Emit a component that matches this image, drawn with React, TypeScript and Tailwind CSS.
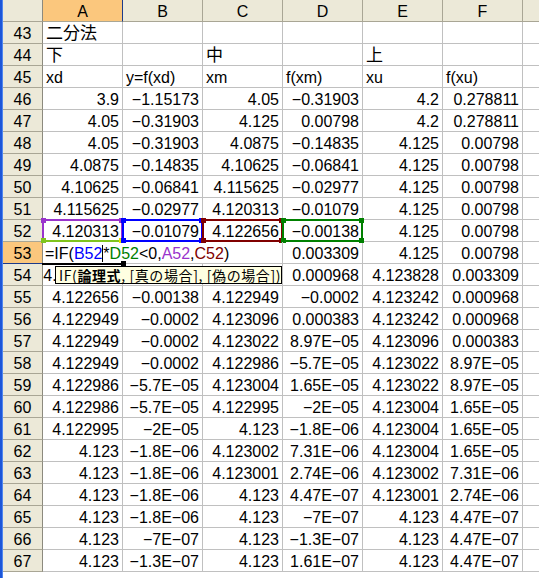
import React from "react";

// Excel 2003 style sheet: 二分法 (bisection) table
const COLS = ["A", "B", "C", "D", "E", "F"];

type Hl = { color: string; bottom?: string; corner?: string };

const HIGHLIGHT: Record<string, Hl> = {
  "52-0": { color: "#9933cc", bottom: "#7fc41c", corner: "#e6e600" },
  "52-1": { color: "#0000ff" },
  "52-2": { color: "#800000" },
  "52-3": { color: "#008000" },
};

const TEXT_ROWS: Record<number, string[]> = {
  43: ["二分法", "", "", "", "", ""],
  44: ["下", "", "中", "", "上", ""],
  45: ["xd", "y=f(xd)", "xm", "f(xm)", "xu", "f(xu)"],
};

// B54/C54 sit under the tooltip, so they are left blank
const NUM_ROWS: Record<number, string[]> = {
  46: ["3.9", "−1.15173", "4.05", "−0.31903", "4.2", "0.278811"],
  47: ["4.05", "−0.31903", "4.125", "0.00798", "4.2", "0.278811"],
  48: ["4.05", "−0.31903", "4.0875", "−0.14835", "4.125", "0.00798"],
  49: ["4.0875", "−0.14835", "4.10625", "−0.06841", "4.125", "0.00798"],
  50: ["4.10625", "−0.06841", "4.115625", "−0.02977", "4.125", "0.00798"],
  51: ["4.115625", "−0.02977", "4.120313", "−0.01079", "4.125", "0.00798"],
  52: ["4.120313", "−0.01079", "4.122656", "−0.00138", "4.125", "0.00798"],
  54: ["4.1234375", "", "", "0.000968", "4.123828", "0.003309"],
  55: ["4.122656", "−0.00138", "4.122949", "−0.0002", "4.123242", "0.000968"],
  56: ["4.122949", "−0.0002", "4.123096", "0.000383", "4.123242", "0.000968"],
  57: ["4.122949", "−0.0002", "4.123022", "8.97E−05", "4.123096", "0.000383"],
  58: ["4.122949", "−0.0002", "4.122986", "−5.7E−05", "4.123022", "8.97E−05"],
  59: ["4.122986", "−5.7E−05", "4.123004", "1.65E−05", "4.123022", "8.97E−05"],
  60: ["4.122986", "−5.7E−05", "4.122995", "−2E−05", "4.123004", "1.65E−05"],
  61: ["4.122995", "−2E−05", "4.123", "−1.8E−06", "4.123004", "1.65E−05"],
  62: ["4.123", "−1.8E−06", "4.123002", "7.31E−06", "4.123004", "1.65E−05"],
  63: ["4.123", "−1.8E−06", "4.123001", "2.74E−06", "4.123002", "7.31E−06"],
  64: ["4.123", "−1.8E−06", "4.123", "4.47E−07", "4.123001", "2.74E−06"],
  65: ["4.123", "−1.8E−06", "4.123", "−7E−07", "4.123", "4.47E−07"],
  66: ["4.123", "−7E−07", "4.123", "−1.3E−07", "4.123", "4.47E−07"],
  67: ["4.123", "−1.3E−07", "4.123", "1.61E−07", "4.123", "4.47E−07"],
};

function Corner({ pos, color }: { pos: string; color: string }) {
  return <span className={`absolute w-[5px] h-[5px] ${pos}`} style={{ background: color }} />;
}

function RangeBox({ hl }: { hl: Hl }) {
  return (
    <div
      className="absolute -top-px -left-px -right-px -bottom-px border-2 z-10 pointer-events-none"
      style={{ borderColor: hl.color, borderBottomColor: hl.bottom ?? hl.color }}
    >
      <Corner pos="-top-[3px] -left-[3px]" color={hl.color} />
      <Corner pos="-top-[3px] -right-[3px]" color={hl.color} />
      <Corner pos="-bottom-[3px] -left-[3px]" color={hl.bottom ?? hl.color} />
      <Corner pos="-bottom-[3px] -right-[3px]" color={hl.corner ?? hl.color} />
    </div>
  );
}

function Cell({ v, left, hl, cjk }: { v: string; left?: boolean; hl?: Hl; cjk?: boolean }) {
  return (
    <div
      className={`relative w-[80px] h-[22px] shrink-0 border-r border-b border-[#c0c0c0] whitespace-nowrap leading-[24px] ${
        left ? "pl-[3px] text-left" : "pr-[3px] text-right"
      } ${cjk ? "text-[17px]" : ""}`}
    >
      {v}
      {hl && <RangeBox hl={hl} />}
    </div>
  );
}

function RowHead({ n, active }: { n: number; active?: boolean }) {
  return (
    <div
      className={`w-[40px] h-[22px] shrink-0 border-r border-b text-center leading-[24px] ${
        active ? "bg-[#fbc77d] border-r-[#8c8a7e] border-b-[#1c3a8a]" : "bg-[#ece9d8] border-[#a9a695] border-r-[#8c8a7e]"
      }`}
    >
      {n}
    </div>
  );
}

export default function App() {
  const rows = Array.from({ length: 25 }, (_, i) => 43 + i);

  return (
    <div className="relative w-[539px] h-[578px] overflow-hidden bg-white flex text-[16px] text-black font-['Liberation_Sans','Noto_Sans_CJK_JP',sans-serif]">
      <div className="w-[3px] shrink-0 bg-[#1d56d8] border-r border-r-[#4f86ef]" />

      <div className="flex-1 flex flex-col">
        {/* column headers */}
        <div className="flex h-[22px] shrink-0">
          <div className="w-[40px] h-[22px] shrink-0 bg-[#ece9d8] border-r border-b border-[#a9a695] border-r-[#8c8a7e]" />
          {COLS.map((c) => (
            <div
              key={c}
              className={`w-[80px] h-[22px] shrink-0 border-r border-b text-center leading-[24px] ${
                c === "A" ? "bg-[#fbc77d] border-b-[#a9a695] border-r-[#1c3a8a]" : "bg-[#ece9d8] border-[#a9a695]"
              }`}
            >
              {c}
            </div>
          ))}
          <div className="flex-1 h-[22px] bg-[#ece9d8] border-b border-[#a9a695]" />
        </div>

        {rows.map((n) => {
          if (n === 53) {
            return (
              <div key={n} className="flex h-[22px] shrink-0">
                <RowHead n={n} active />
                <div className="relative w-[240px] h-[22px] shrink-0 border-r border-b border-[#c0c0c0] pl-[2px] leading-[24px] whitespace-nowrap z-20">
                  <span>=IF(</span>
                  <span className="text-[#0000ff]">B52</span>
                  <span className="inline-block w-px h-[17px] bg-black align-[-3px]" />
                  <span>*</span>
                  <span className="text-[#008000]">D52</span>
                  <span>&lt;0,</span>
                  <span className="text-[#9933cc]">A52</span>
                  <span>,</span>
                  <span className="text-[#800000]">C52</span>
                  <span>)</span>
                  <span className="absolute -left-px -bottom-[2px] w-[81px] h-[2px] bg-black" />
                  <span className="absolute left-[78px] -bottom-[3px] w-[5px] h-[5px] bg-black" />
                </div>
                <Cell v="0.003309" />
                <Cell v="4.125" />
                <Cell v="0.00798" />
                <div className="flex-1 h-[22px] border-b border-[#c0c0c0]" />
              </div>
            );
          }
          const text = TEXT_ROWS[n];
          const vals = text ?? NUM_ROWS[n];
          return (
            <div key={n} className="flex h-[22px] shrink-0">
              <RowHead n={n} />
              {vals.map((v, i) => (
                <Cell key={i} v={v} left={!!text} cjk={n === 43 || n === 44} hl={HIGHLIGHT[`${n}-${i}`]} />
              ))}
              <div className="flex-1 h-[22px] border-b border-[#c0c0c0]" />
            </div>
          );
        })}
      </div>

      {/* function argument tooltip */}
      <div className="absolute left-[55px] top-[266px] w-[227px] h-[18px] pl-[3px] z-30 bg-[#ffffe1] border border-black text-[14px] leading-[16px] tracking-[0.6px] whitespace-nowrap font-['Noto_Sans_CJK_JP',sans-serif]">
        IF(<b>論理式</b>, [真の場合], [偽の場合])
      </div>
    </div>
  );
}
